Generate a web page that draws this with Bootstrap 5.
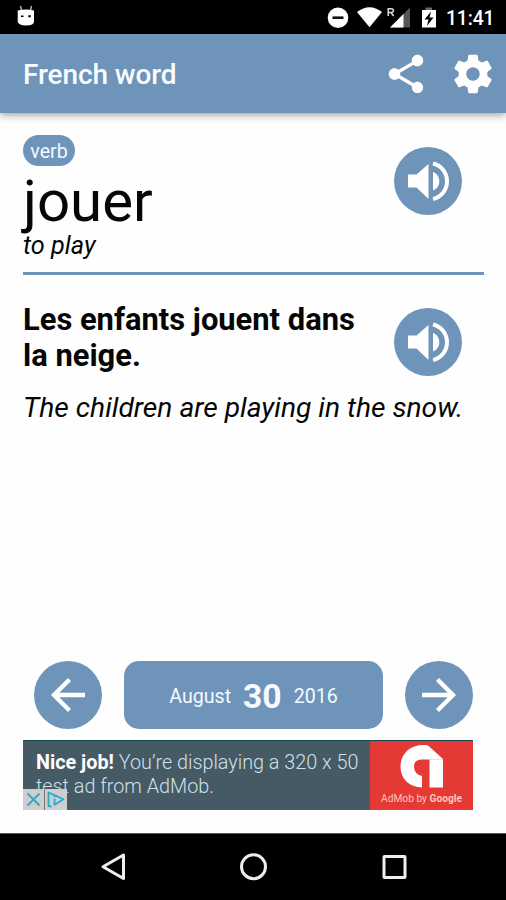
<!DOCTYPE html>
<html lang="en">
<head>
<meta charset="utf-8">
<meta name="viewport" content="width=device-width, initial-scale=1">
<title>French word</title>
<link href="https://cdn.jsdelivr.net/npm/bootstrap@5.3.0/dist/css/bootstrap.min.css" rel="stylesheet">
<style>
:root{--brand:#6e94ba}
body{font-family:Roboto,"Noto Sans",sans-serif;color:#060606}
svg{display:block;flex:none}
.screen{width:506px;height:900px;background:#fefefe;overflow:hidden}
.statusbar{height:34px;padding:0 13px 0 16px}
.clock{font-size:19.3px;font-weight:500;line-height:34px;width:47px;margin-left:8px;padding-top:3px;letter-spacing:-.1px;white-space:nowrap}
.appbar{height:79px;flex:none;background:var(--brand);padding:0 10px 0 23px;box-shadow:0 2px 8px rgba(0,0,0,.38);z-index:1}
.title{font-size:28px;font-weight:500;line-height:34px;color:#f8fcff;padding-top:2px;letter-spacing:-.1px}
.share{margin-right:21px}
.content{padding:22px 22px 0 23px}
.word{height:140px;border-bottom:3px solid var(--brand)}
.pill{background:var(--brand);border-radius:16px;height:31px;width:52px;font-size:19.6px;line-height:33px;color:#f4f9ff}
.headword{font-size:58.2px;line-height:58px;margin-top:6px}
.meaning{font-size:25.3px;line-height:28px;font-style:italic;margin-top:2px}
.disc{width:68px;height:68px;border:0;padding:0;background:var(--brand);border-radius:50%;color:#fff;flex:none}
.say{margin:12px 22px 0 0}
.say2{margin:6px 22px 0 0}
.example{padding-top:27px}
.sentence{font-size:30.9px;font-weight:700;line-height:36px;width:350px}
.translation{font-size:28.2px;font-style:italic;line-height:34px;margin-top:15px;white-space:nowrap}
.pager{height:68px;margin:0 33px 0 34px}
.date{width:259px;border:0;border-radius:15px;background:var(--brand);color:#f5faff;font-size:19.6px;gap:12px;padding-top:4px}
.day{font-size:33.7px;font-weight:700;line-height:1}
.advert{width:450px;height:70px;margin:11px 0 23px 23px;background:#455a64;border-top:1px solid #174851}
.adtext{width:347px;padding:10px 0 0 13px;font-size:19.8px;line-height:23.5px;font-weight:300;color:#cfe1e9;white-space:nowrap}
.adtext b{color:#fff;font-weight:700}
.adlogo{width:103px;background:#e53935;color:#ffc3b8;font-size:10.2px;line-height:14px}
.choices{left:0;bottom:0;height:21px;width:44px;background:#cdcfcf}
.navkeys{height:67px;flex:none;border-top:1px solid #555}
</style>
<script src="https://cdn.jsdelivr.net/npm/bootstrap@5.3.0/dist/js/bootstrap.bundle.min.js"></script>
</head>
<body>
<svg width="0" height="0" class="position-absolute" aria-hidden="true">
  <symbol id="speaker" viewBox="0 0 68 68">
    <path fill="#fff" d="M14 27.500h8.500L34.500 17v35L22.500 40.500H14zM39 25c4 1.300 6.300 5 6.300 9.300S43 42 39 43.500z"/>
    <path fill="none" stroke="#fff" stroke-width="4" d="M39 16.500c8 1.800 14 9 14 17.800s-6 16-14 17.800"/>
  </symbol>
</svg>
<div class="screen d-flex flex-column">
  <div class="statusbar bg-black text-white d-flex align-items-center flex-shrink-0">
    <svg width="20" height="24" viewBox="0 0 20 24"><path d="M4.500 1l1 4.500M15.500 1l-1 4.500" stroke="#aaa" stroke-width="1.600"/><path fill="#fff" d="M1.700 5.500q8.300-2 16.300 0v11q0 4-7.800 4t-8.500-4z"/><path fill="#000" d="M5 10.500h2.500v1.500H5zM12.300 10.300h2.500v2h-2.500z"/></svg>
    <svg class="ms-auto" width="118" height="34" viewBox="320 0 118 34">
      <circle cx="338" cy="17.700" r="10.300" fill="#fff"/><path d="M332.500 17.700h11" stroke="#111" stroke-width="2.600"/>
      <path fill="#fff" d="M357 12q12.500-9.500 25 0l-12.500 15.300z"/>
      <path fill="#555" d="M410 7.500V27.500H390z"/><path fill="#fff" d="M403.500 14v13.500H390z"/>
      <path fill="none" stroke="#ddd" stroke-width="1.500" d="M388.200 16V8.700h3.200q2 0 2 1.900t-2 1.900h-3.200M391 12.500l2.600 3.500"/>
      <path fill="#666" d="M425.500 7.500h6.500v3h-6.500z"/><path fill="#fff" d="M422 10h14v17.500h-14z"/><path fill="#000" d="M431 11.500l-6.500 8h4l-1.500 6.500 6.500-8.500h-4z"/>
    </svg>
    <span class="clock">11:41</span>
  </div>
  <header class="appbar d-flex align-items-center position-relative">
    <h1 class="title mb-0 me-auto">French word</h1>
    <svg class="share" width="46" height="46" viewBox="0 0 24 24" fill="#fff"><path d="M18 16.080c-.76 0-1.440.3-1.960.77L8.910 12.700c.05-.23.09-.46.09-.7s-.04-.47-.09-.7l7.050-4.110c.54.5 1.250.81 2.040.81 1.660 0 3-1.340 3-3s-1.340-3-3-3-3 1.340-3 3c0 .24.04.47.09.7L8.040 9.810C7.500 9.310 6.790 9 6 9c-1.660 0-3 1.340-3 3s1.340 3 3 3c.79 0 1.500-.31 2.040-.81l7.120 4.160c-.05.21-.08.43-.08.65 0 1.610 1.310 2.920 2.920 2.920s2.920-1.310 2.920-2.920-1.310-2.920-2.920-2.920z"/></svg>
    <svg width="46" height="46" viewBox="0 0 24 24" fill="#fff"><path d="M19.430 12.980c.04-.32.07-.64.07-.98s-.03-.66-.07-.98l2.110-1.650c.19-.15.24-.42.12-.64l-2-3.460c-.12-.22-.39-.3-.61-.22l-2.490 1c-.52-.4-1.080-.73-1.690-.98l-.38-2.650C14.460 2.180 14.250 2 14 2h-4c-.25 0-.46.18-.49.42l-.38 2.650c-.61.25-1.170.59-1.690.98l-2.490-1c-.23-.09-.49 0-.61.22l-2 3.460c-.13.22-.07.49.12.64l2.110 1.650c-.04.32-.07.65-.07.98s.03.66.07.98l-2.110 1.650c-.19.15-.24.42-.12.64l2 3.460c.12.22.39.3.61.22l2.490-1c.52.4 1.080.73 1.690.98l.38 2.650c.03.24.24.42.49.42h4c.25 0 .46-.18.49-.42l.38-2.650c.61-.25 1.170-.59 1.690-.98l2.490 1c.23.09.49 0 .61-.22l2-3.460c.12-.22.07-.49-.12-.64zM12 15.500c-1.930 0-3.500-1.570-3.500-3.500s1.570-3.500 3.500-3.500 3.500 1.570 3.500 3.500-1.570 3.500-3.500 3.500z"/></svg>
  </header>
  <main class="content flex-grow-1">
    <section class="word d-flex justify-content-between align-items-start">
      <div>
        <div class="pill text-center">verb</div>
        <div class="headword">jouer</div>
        <div class="meaning">to play</div>
      </div>
      <button class="disc say" aria-label="Play word"><svg width="68" height="68"><use href="#speaker"/></svg></button>
    </section>
    <section class="example">
      <div class="d-flex justify-content-between align-items-start">
        <div class="sentence">Les enfants jouent dans la neige.</div>
        <button class="disc say2" aria-label="Play sentence"><svg width="68" height="68"><use href="#speaker"/></svg></button>
      </div>
      <div class="translation">The children are playing in the snow.</div>
    </section>
  </main>
  <div class="pager d-flex justify-content-between flex-shrink-0">
    <button class="disc" aria-label="Previous day"><svg width="68" height="68" viewBox="0 0 68 68" fill="none" stroke="#fff" stroke-width="4.300"><path d="M51 34H20M35.500 18.500L20 34l15.500 15.500"/></svg></button>
    <button class="date d-flex justify-content-center align-items-center"><span>August</span><span class="day">30</span><span>2016</span></button>
    <button class="disc" aria-label="Next day"><svg width="68" height="68" viewBox="0 0 68 68" fill="none" stroke="#fff" stroke-width="4.300"><path d="M17 34h31M32.500 18.500L48 34 32.500 49.500"/></svg></button>
  </div>
  <div class="advert d-flex position-relative flex-shrink-0">
    <div class="adtext"><b>Nice job!</b> You’re displaying a 320 x 50<br>test ad from AdMob.</div>
    <div class="adlogo d-flex flex-column align-items-center">
      <svg width="103" height="51" viewBox="0 0 103 51"><path fill="#fff" d="M52 46.500V35q-8-2-8-9.500 0-7 8-7h7.500v28H73V18L58 4.500C42 2 30.500 12 30.500 25.500 30.500 38 39 46 52 46.500z"/><path d="M59 18.500h14" stroke="#ddd" stroke-width=".8"/></svg>
      <div>AdMob by <span class="fw-bold">Google</span></div>
    </div>
    <div class="choices position-absolute"><svg width="44" height="21" viewBox="0 0 44 21" fill="none" stroke="#27a9cf" stroke-width="1.800"><path d="M4.500 4.500l12 12M16.500 4.500l-12 12"/><path stroke="#777" stroke-width="1" d="M21.500 0v21"/><path stroke-linejoin="round" d="M28.500 17.500l-3-.5V3.500l15 6.700-8.500 5.300M31.500 9.500v7M31.500 6v2"/></svg></div>
  </div>
  <nav class="navkeys bg-black d-flex justify-content-center align-items-center">
    <svg width="310" height="40" viewBox="98 847 310 40" fill="none" stroke="#eee" stroke-width="3"><path stroke-linejoin="round" d="M123.500 855v23.500L103 866.700z"/><circle cx="253.500" cy="866.700" r="12"/><rect x="384" y="856.500" width="21" height="21" rx=".5"/></svg>
  </nav>
</div>
</body>
</html>
